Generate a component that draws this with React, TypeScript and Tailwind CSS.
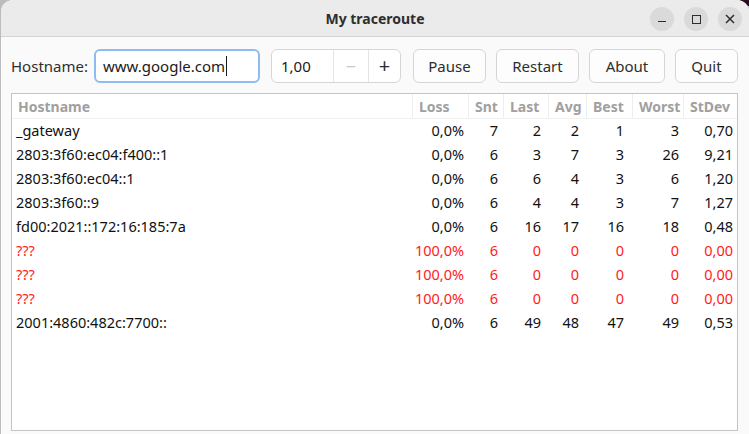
import React from "react";

type Row = { host: string; loss: string; snt: string; last: string; avg: string; best: string; worst: string; stdev: string; red?: boolean };

const rows: Row[] = [
  { host: "_gateway", loss: "0,0%", snt: "7", last: "2", avg: "2", best: "1", worst: "3", stdev: "0,70" },
  { host: "2803:3f60:ec04:f400::1", loss: "0,0%", snt: "6", last: "3", avg: "7", best: "3", worst: "26", stdev: "9,21" },
  { host: "2803:3f60:ec04::1", loss: "0,0%", snt: "6", last: "6", avg: "4", best: "3", worst: "6", stdev: "1,20" },
  { host: "2803:3f60::9", loss: "0,0%", snt: "6", last: "4", avg: "4", best: "3", worst: "7", stdev: "1,27" },
  { host: "fd00:2021::172:16:185:7a", loss: "0,0%", snt: "6", last: "16", avg: "17", best: "16", worst: "18", stdev: "0,48" },
  { host: "???", loss: "100,0%", snt: "6", last: "0", avg: "0", best: "0", worst: "0", stdev: "0,00", red: true },
  { host: "???", loss: "100,0%", snt: "6", last: "0", avg: "0", best: "0", worst: "0", stdev: "0,00", red: true },
  { host: "???", loss: "100,0%", snt: "6", last: "0", avg: "0", best: "0", worst: "0", stdev: "0,00", red: true },
  { host: "2001:4860:482c:7700::", loss: "0,0%", snt: "6", last: "49", avg: "48", best: "47", worst: "49", stdev: "0,53" },
];

const headers = ["Loss", "Snt", "Last", "Avg", "Best", "Worst", "StDev"];
const grid = "grid grid-cols-[400px_56px_35px_45px_38px_46px_51px_54px]";

function Btn({ label, w }: { label: string; w: string }) {
  return (
    <button className={`${w} h-[34px] rounded-[6px] border border-[#d6d6d6] bg-[#fdfdfd] text-[15px] text-[#2e2e2e] flex items-center justify-center`}>
      {label}
    </button>
  );
}

export default function App() {
  return (
    <div className="w-[749px] h-[434px] bg-[#bcbcbc] relative overflow-hidden" style={{ fontFamily: '"Noto Sans", "Open Sans", sans-serif' }}>
      <div className="absolute right-0 top-0 w-[20px] h-[6px] bg-[#2c0a1e]" />
      <div className="absolute left-[1px] top-0 right-0 bottom-0 rounded-t-[12px] overflow-hidden flex flex-col bg-[#fafafa]">
        {/* title bar */}
        <div className="h-[37px] shrink-0 bg-[#ebebeb] border-b border-[#d4d4d4] relative flex items-center justify-center">
          <span className="text-[14px] font-bold text-[#2e2e2e] mt-[1px]">My traceroute</span>
          <div className="absolute right-[7px] top-[7px] flex gap-[10px]">
            <div className="w-[24px] h-[24px] rounded-full bg-[#dadada] flex items-center justify-center">
              <div className="w-[8px] h-[1.5px] bg-[#2e2e2e] mt-[5px]" />
            </div>
            <div className="w-[24px] h-[24px] rounded-full bg-[#dadada] flex items-center justify-center">
              <div className="w-[9px] h-[9px] border border-[#2e2e2e]" />
            </div>
            <div className="w-[24px] h-[24px] rounded-full bg-[#dadada] flex items-center justify-center">
              <svg width="10" height="10" viewBox="0 0 10 10"><path d="M1 1L9 9M9 1L1 9" stroke="#2e2e2e" strokeWidth="1.5" /></svg>
            </div>
          </div>
        </div>
        {/* toolbar */}
        <div className="flex items-center pl-[10px] pt-[12px] pb-[9px] shrink-0">
          <span className="text-[15px] text-[#2e2e2e] w-[83px]">Hostname:</span>
          <div className="w-[166px] h-[34px] rounded-[6px] border-2 border-[#8fbcf0] bg-white flex items-center pl-[7px] text-[15px] text-[#1a1a1a]">
            www.google.com<span className="inline-block w-[1px] h-[20px] bg-[#1a1a1a] ml-[1px]" />
          </div>
          <div className="ml-[11px] w-[130px] h-[34px] rounded-[6px] border border-[#d6d6d6] bg-white flex items-stretch text-[15px]">
            <div className="w-[61px] flex items-center pl-[9px] text-[#1a1a1a]">1,00</div>
            <div className="w-[35px] border-l border-[#e4e4e4] flex items-center justify-center text-[#c8c8c8] text-[18px]">−</div>
            <div className="flex-1 border-l border-[#e4e4e4] flex items-center justify-center text-[#2e2e2e] text-[20px]">+</div>
          </div>
          <div className="ml-[12px] flex gap-[10px]">
            <Btn label="Pause" w="w-[73px]" />
            <Btn label="Restart" w="w-[83px]" />
            <Btn label="About" w="w-[76px]" />
            <Btn label="Quit" w="w-[63px]" />
          </div>
        </div>
        {/* table */}
        <div className="ml-[10px] mr-[11px] mt-[1px] mb-[3px] flex-1 border border-[#c4c4c4] bg-white">
          <div className={`${grid} h-[25px] border-b border-[#f2f2f2] text-[14px] font-bold text-[#a0a0a0]`}>
            <div className="pl-[6px] flex items-center">Hostname</div>
            {headers.map((h) => (
              <div key={h} className="pl-[6px] flex items-center border-l border-[#eeeeee]">{h}</div>
            ))}
          </div>
          {rows.map((r, i) => {
            const c = r.red ? "text-[#ff1a1a]" : "text-[#111]";
            const cells = [r.loss, r.snt, r.last, r.avg, r.best, r.worst, r.stdev];
            const pads = ["pr-[4px]", "pr-[5px]", "pr-[7px]", "pr-[7px]", "pr-[8px]", "pr-[4px]", "pr-[4px]"];
            return (
              <div key={i} className={`${grid} h-[24px] text-[14.5px] ${c}`}>
                <div className="pl-[4px] flex items-center">{r.host}</div>
                {cells.map((v, j) => (
                  <div key={j} className={`flex items-center justify-end ${pads[j]}`}>{v}</div>
                ))}
              </div>
            );
          })}
        </div>
      </div>
    </div>
  );
}
